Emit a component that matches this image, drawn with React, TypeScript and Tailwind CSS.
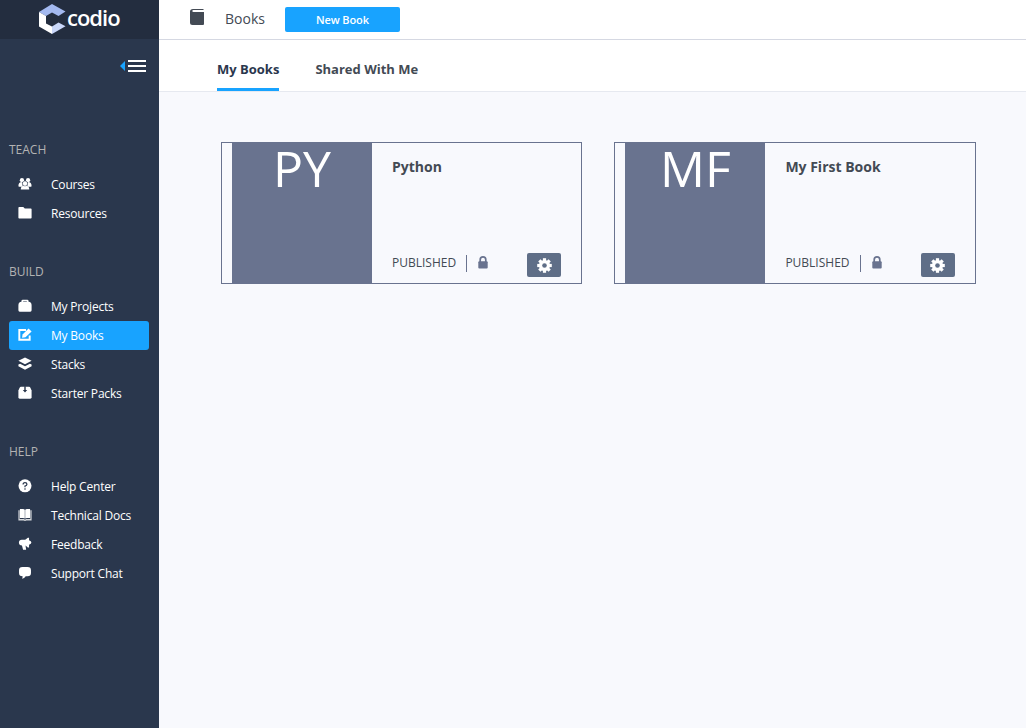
import type { ReactNode } from "react";

type IconProps = { children: ReactNode };

function Glyph({ children }: IconProps) {
  return (
    <svg viewBox="-0.4 -0.5 13.8 13.8" className="-mt-px h-[14px] w-[14px] shrink-0" fill="white">
      {children}
    </svg>
  );
}

const icons = {
  courses: (
    <Glyph>
      <circle cx="3.5" cy="2.6" r="2.1" />
      <circle cx="9.5" cy="2.6" r="2.1" />
      <path d="M0 8.600C0 5.500 1.200 4.500 3.400 4.500l1 4.500H.6zM13 8.600C13 5.500 11.800 4.500 9.600 4.500l-1 4.500h3.800z" />
      <path d="M2.300 11.800c0-2.600 1.200-3.600 4.200-3.600s4.200 1 4.200 3.600z" />
      <circle cx="6.5" cy="5.900" r="2.500" stroke="#2a374d" strokeWidth=".4" />
    </Glyph>
  ),
  folder: (
    <Glyph>
      <path d="M0 1.200Q0 .4.8.4h4l1.500 1.500h5.900q.8 0 .8.8v8.300q0 .8-.8.8H.8q-.8 0-.8-.8z" />
    </Glyph>
  ),
  bag: (
    <Glyph>
      <path d="M3 2.200V1.500Q3 .2 4.300.2h4.400q1.300 0 1.300 1.300v.7q3 .3 3 3.500v5q0 1.300-1.300 1.300H1.300Q0 12 0 10.700V5.700q0-3.200 3-3.500zM4.700 2.200h3.600V1.600H4.700z" fillRule="evenodd" />
    </Glyph>
  ),
  edit: (
    <Glyph>
      <path d="M7.500 1.400H.9v9.700h10.200V7" fill="none" stroke="white" strokeWidth="1.900" />
      <path d="M3.600 9.200l.5-3.400L10 0l3 2.900L7 8.700z" />
    </Glyph>
  ),
  layers: (
    <Glyph>
      <path d="M6.500 0L13 3.300 6.500 6.600 0 3.300z" />
      <path d="M0 6.800l1.700-.6 4.800 2.300 4.800-2.300 1.700.6v1.800L6.500 12 0 8.600z" />
    </Glyph>
  ),
  pack: (
    <Glyph>
      <path d="M2.500.2h8Q11.300.2 11.800 1.200L13 4v6.700q0 1.300-1.300 1.300H1.300Q0 12 0 10.700V4l1.200-2.800Q1.700.2 2.500.2z" />
      <path d="M5.800-.2h1.400v3.700h1.500L6.500 6 4.300 3.500h1.500z" fill="#2a374d" />
    </Glyph>
  ),
  help: (
    <Glyph>
      <circle cx="6.500" cy="6.200" r="6.400" />
      <path d="M4.600 4.900q0-1.900 1.900-1.900t1.900 1.700Q8.400 5.900 6.500 6.400v1.200" fill="none" stroke="#2a374d" strokeWidth="1.200" />
      <circle cx="6.500" cy="9.400" r=".8" fill="#2a374d" />
    </Glyph>
  ),
  docs: (
    <Glyph>
      <path d="M0 1.600h1.200v8.800H5.500l1 .6 1-.6h4.300V1.600H13v10.200H8l-1.500.6-1.500-.6H0z" opacity=".8" />
      <path d="M1.500.6h3q1.300 0 1.800.6v8.600q-.6-.5-1.800-.5h-3zM11.500.6h-3q-1.300 0-1.800.6v8.600q.6-.5 1.800-.5h3z" />
    </Glyph>
  ),
  feedback: (
    <Glyph>
      <path d="M9.300.2h1.200v2.600q2.300.7 2.300 2.200t-2.300 2.200v2.600H9.300L7 8l.6 4.100H4.600L3.500 8Q.5 8 .5 5t3-2.900h3.200z" />
    </Glyph>
  ),
  chat: (
    <Glyph>
      <path d="M4 .6h5q3.400 0 3.400 3.200v2.500Q12.400 9.500 9 9.500H7.200q-1.300 2-3.600 2.500.7-1.200.5-2.500Q.6 9.500.6 6.300V3.800Q.6.6 4 .6z" />
    </Glyph>
  ),
};

const sections = [
  { title: "TEACH", items: [["Courses", icons.courses], ["Resources", icons.folder]] },
  {
    title: "BUILD",
    items: [
      ["My Projects", icons.bag],
      ["My Books", icons.edit],
      ["Stacks", icons.layers],
      ["Starter Packs", icons.pack],
    ],
  },
  {
    title: "HELP",
    items: [
      ["Help Center", icons.help],
      ["Technical Docs", icons.docs],
      ["Feedback", icons.feedback],
      ["Support Chat", icons.chat],
    ],
  },
] as { title: string; items: [string, ReactNode][] }[];

function Logo() {
  return (
    <div className="flex h-[39px] items-start bg-[#232d3f] pl-[39px]">
      <svg viewBox="0 0 27 30" className="mt-1 h-[30px] w-[27px]">
        <path d="M0 8L13 0l13.500 7.500-7 4.500L13 8.500l-6 3.500z" fill="#a3b9f0" />
        <path d="M0 8l7 4v7.500l6 3V30L0 22.500z" fill="white" />
        <path d="M13 22.500l6.500-4 7 3.700L13 30z" fill="#c9d7fa" />
      </svg>
      <span className="ml-[1px] mt-[3px] text-[22px] font-semibold leading-[28px] tracking-[-1px] text-white">codio</span>
    </div>
  );
}

function Sidebar() {
  return (
    <aside className="flex w-[159px] shrink-0 flex-col bg-[#2a374d]">
      <Logo />
      <div className="flex h-[100px] items-start justify-end pr-[13px] pt-[21px]">
        <svg viewBox="0 0 26 12" className="h-3 w-[26px]">
          <path d="M0 6l5-5v10z" fill="#18a3ff" />
          <path d="M8 0h18v2H8zM8 5h18v2H8zM8 10h18v2H8z" fill="white" />
        </svg>
      </div>
      <nav className="flex flex-col gap-[33px] px-[9px]">
        {sections.map((s) => (
          <section key={s.title}>
            <h2 className="mb-[11px] h-5 text-[12px] leading-[21px] text-[#b3b3b3]">{s.title}</h2>
            {s.items.map(([label, icon]) => (
              <a
                key={label}
                className={`flex h-[29px] w-[140px] items-center gap-[19px] rounded-[3px] pl-[9px] text-[12px] leading-[19px] tracking-[-0.2px] text-white ${label === "My Books" ? "bg-[#18a3ff]" : ""}`}
              >
                {icon}
                <span className="whitespace-nowrap">{label}</span>
              </a>
            ))}
          </section>
        ))}
      </nav>
    </aside>
  );
}

function BookCard({ initials, title }: { initials: string; title: string }) {
  return (
    <article className="flex h-[142px] w-[361.2px] border border-[#69738f] pl-[10px]">
      <div className="flex w-[140px] shrink-0 justify-center bg-[#69738f] text-[50px] leading-[50px] text-white">
        {initials}
      </div>
      <div className="flex flex-1 flex-col justify-between pb-[6px] pl-5 pr-5 pt-[14px]">
        <h3 className="text-[14px] font-bold leading-5 text-[#434a54]">{title}</h3>
        <div className="flex h-6 items-center text-[12px] text-[#434a54]">
          <span className="-mt-[5px]">PUBLISHED</span>
          <span className="-mt-[3px] ml-[10px] h-[17px] w-px bg-[#69738f]" />
          <svg viewBox="0 0 10 13" className="-mt-[5px] ml-[11px] h-[13px] w-[10px]">
            <path d="M2.200 6V3.700a2.800 2.800 0 015.600 0V6" fill="none" stroke="#69738f" strokeWidth="1.700" />
            <rect x=".3" y="5.200" width="9.400" height="7.300" rx="1" fill="#69738f" />
          </svg>
          <button className="ml-auto flex h-6 w-[34px] items-center justify-center rounded-[2px] bg-[#5f6e87]">
            <svg viewBox="0 0 15 15" className="h-[15px] w-[15px]">
              <g fill="white">
                <circle cx="7.500" cy="7.500" r="5.500" />
                <path d="M5.900.2h3.200v14.600H5.900z" />
                <path d="M5.900.2h3.200v14.600H5.900z" transform="rotate(45 7.500 7.500)" />
                <path d="M5.900.2h3.200v14.600H5.900z" transform="rotate(90 7.500 7.500)" />
                <path d="M5.900.2h3.200v14.600H5.900z" transform="rotate(135 7.500 7.500)" />
              </g>
              <circle cx="7.500" cy="7.500" r="2.300" fill="#5f6e87" />
            </svg>
          </button>
        </div>
      </div>
    </article>
  );
}

export default function App() {
  return (
    <div className="flex h-[728px] w-[1026px] overflow-hidden bg-[#f8f9fd] font-['Open_Sans',sans-serif]">
      <Sidebar />
      <main className="flex flex-1 flex-col">
        <header className="flex h-10 items-start border-b border-[#d5d8e2] bg-white pl-[31px]">
          <svg viewBox="0 0 14 16" className="mt-[9px] h-4 w-[14px]">
            <path d="M3 0h10.500v1H3.500Q2.300 1 2.300 2t1.200 1H14v12q0 1-1 1H2.500Q0 16 0 13.500V2.500Q0 0 3 0z" fill="#434a54" />
          </svg>
          <h1 className="ml-[21px] mt-[9px] text-[14px] leading-5 text-[#434a54]">Books</h1>
          <button className="ml-5 mt-[7px] h-[25px] w-[115px] rounded-[2px] bg-[#18a3ff] pt-px text-[11px] font-semibold tracking-[-0.1px] text-white">
            New Book
          </button>
        </header>
        <div className="flex h-[52px] gap-9 border-b border-[#e6e9f0] bg-white pl-[58px] text-[13px] font-bold text-[#434a54]">
          <span className="h-[51px] border-b-[3px] border-[#18a3ff] pt-5 leading-[19px] text-[#2a374d]">My Books</span>
          <span className="pt-5 leading-[19px]">Shared With Me</span>
        </div>
        <div className="flex gap-[32.2px] pl-[62px] pt-[50px]">
          <BookCard initials="PY" title="Python" />
          <BookCard initials="MF" title="My First Book" />
        </div>
      </main>
    </div>
  );
}
